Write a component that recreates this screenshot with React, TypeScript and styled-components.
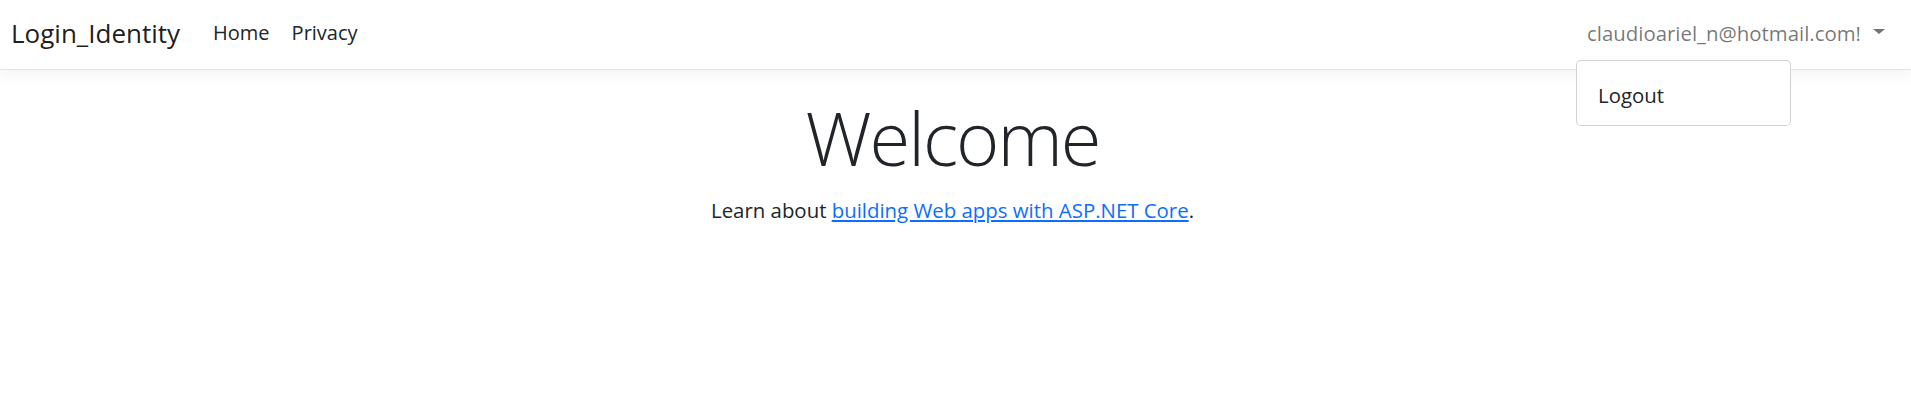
import React from "react";
import styled, { createGlobalStyle } from "styled-components";

const GlobalStyle = createGlobalStyle`
  html, body {
    margin: 0;
    padding: 0;
    background: #ffffff;
    font-family: "Open Sans", "Noto Sans", "Liberation Sans", sans-serif;
    color: #212529;
  }
  * { box-sizing: border-box; }
`;

const Navbar = styled.header`
  position: relative;
  display: flex;
  align-items: center;
  justify-content: space-between;
  height: 70px;
  padding: 0 16px 4px 11px;
  background: #ffffff;
  border-bottom: 1px solid #dee2e6;
  box-shadow: 0 5px 15px rgba(0, 0, 0, 0.05);
  z-index: 2;
`;

const LeftGroup = styled.nav`
  display: flex;
  align-items: center;
`;

const Brand = styled.a`
  font-size: 26px;
  line-height: 38px;
  color: rgba(0, 0, 0, 0.9);
  text-decoration: none;
  margin-right: 22px;
`;

const NavList = styled.ul`
  display: flex;
  list-style: none;
  margin: 0;
  padding: 0;
`;

const NavLink = styled.a`
  display: block;
  padding: 10px 11px;
  font-size: 20px;
  line-height: 30px;
  color: #212529;
  text-decoration: none;
`;

const UserMenu = styled.div`
  position: relative;
`;

const UserToggle = styled.a`
  display: block;
  padding: 10px 10px;
  font-size: 20.4px;
  line-height: 30px;
  color: rgba(0, 0, 0, 0.55);
  text-decoration: none;
  white-space: nowrap;
`;

const Caret = styled.span`
  display: inline-block;
  margin-left: 12px;
  vertical-align: 7px;
  border-top: 5px solid rgba(0, 0, 0, 0.55);
  border-left: 6.5px solid transparent;
  border-right: 6.5px solid transparent;
`;

const Dropdown = styled.ul`
  position: absolute;
  top: calc(100% + 2px);
  left: -1px;
  width: 215px;
  margin: 0;
  padding: 14px 0 10px;
  list-style: none;
  background: #ffffff;
  border: 1px solid rgba(0, 0, 0, 0.175);
  border-radius: 5px;
`;

const DropdownItem = styled.a`
  display: block;
  padding: 5px 21px;
  font-size: 20.4px;
  line-height: 30px;
  color: #212529;
  text-decoration: none;
`;

const Main = styled.main`
  padding: 24px 6px 0 0;
  text-align: center;
`;

const Title = styled.h1`
  margin: 0 0 12px;
  font-size: 74px;
  line-height: 1.2;
  font-weight: 300;
  letter-spacing: -2px;
  color: #212529;
`;

const Lead = styled.p`
  margin: 0;
  font-size: 20.4px;
  line-height: 30px;
  color: #212529;
`;

const Link = styled.a`
  color: #0d6efd;
  text-decoration: underline;
`;

export default function App() {
  return (
    <>
      <GlobalStyle />
      <Navbar>
        <LeftGroup>
          <Brand href="#">Login_Identity</Brand>
          <NavList>
            <li><NavLink href="#">Home</NavLink></li>
            <li><NavLink href="#">Privacy</NavLink></li>
          </NavList>
        </LeftGroup>
        <UserMenu>
          <UserToggle href="#">
            claudioariel_n@hotmail.com!
            <Caret />
          </UserToggle>
          <Dropdown>
            <li><DropdownItem href="#">Logout</DropdownItem></li>
          </Dropdown>
        </UserMenu>
      </Navbar>
      <Main>
        <Title>Welcome</Title>
        <Lead>
          Learn about <Link href="#">building Web apps with ASP.NET Core</Link>.
        </Lead>
      </Main>
    </>
  );
}
